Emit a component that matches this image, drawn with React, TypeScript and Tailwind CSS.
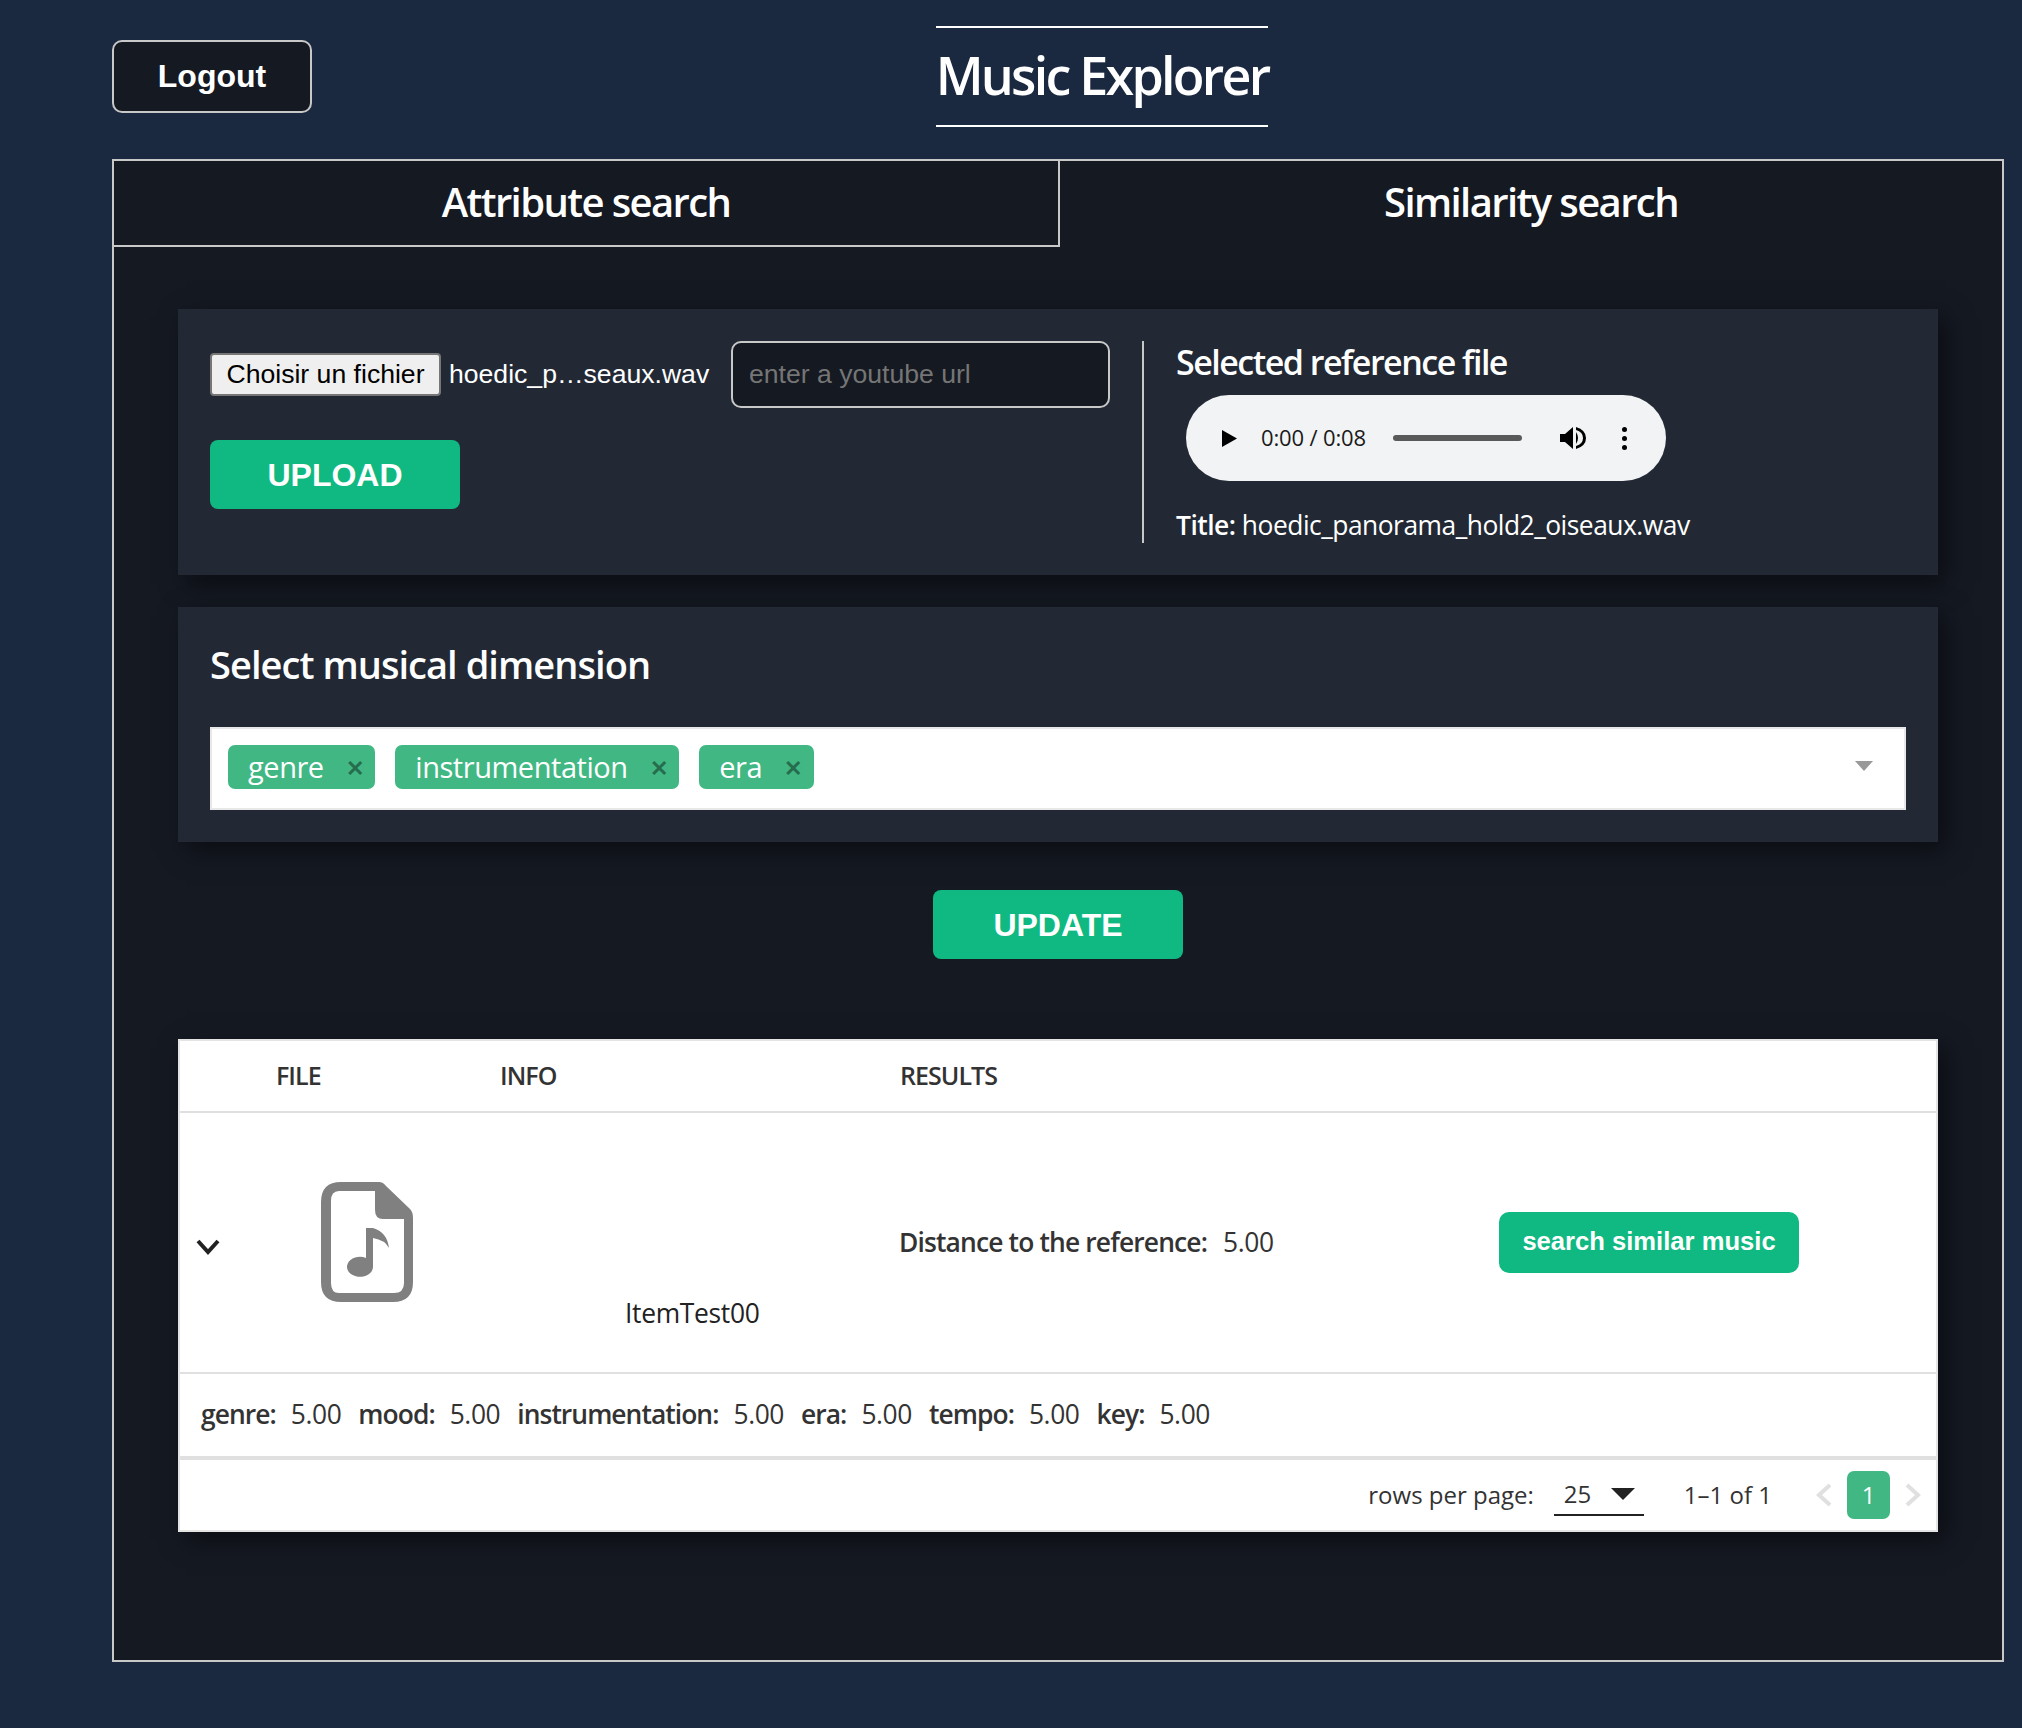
import React from 'react';

const openSans = { fontFamily: '"Open Sans", sans-serif' };

const dimensions = ['genre', 'instrumentation', 'era'];
const scores = ['genre', 'mood', 'instrumentation', 'era', 'tempo', 'key'];

// Green multiselect tag
const Tag: React.FC<{ label: string }> = ({ label }) => (
  <span className="flex h-[44px] items-center rounded-[7px] bg-[#41b883] pl-[20px] pr-[12px] text-[29px] tracking-[-0.45px] text-white">
    <span>{label}</span>
    <span className="ml-[22px] text-[22px] font-bold leading-none text-[#266d4d]">✕</span>
  </span>
);

const FileAudioIcon = () => (
  <svg width="92" height="120" viewBox="0 0 92 120" fill="#808080">
    <path
      fillRule="evenodd"
      d="M20 0H58Q62 0 65 4L89 27Q92 30 92 36V100Q92 120 72 120H20Q0 120 0 100V20Q0 0 20 0ZM18 9Q10 9 10 19V101Q10 111 18 111H73Q83 111 83 101V37H62Q54 37 54 28V9Z"
    />
    <path d="M45 46H52Q66 50 68 66Q64 58 52 56V85A13 10 0 1 1 45 76Z" />
  </svg>
);

const App: React.FC = () => {
  return (
    <div className="min-h-[1728px] bg-[#1a2840] pl-[112px] pr-[18px] pt-[26px]" style={openSans}>
      {/* Header */}
      <div className="flex items-start">
        <button
          className="mt-[14px] h-[73px] w-[200px] rounded-[10px] border-2 border-[#c8c8c8] bg-[#151922] pb-[2px] text-[32px] font-bold text-white"
          style={{ fontFamily: '"Liberation Sans", sans-serif' }}
        >
          Logout
        </button>
        <h1 className="ml-[624px] flex h-[101px] w-[332px] items-center justify-center whitespace-nowrap border-y-2 border-white pb-[4px] text-[52px] font-semibold tracking-[-2.75px] text-white">
          Music Explorer
        </h1>
      </div>

      {/* Main frame */}
      <div className="mt-[32px] h-[1503px] border-2 border-[#c8c8c8] bg-[#151922] text-white">
        <div className="flex h-[86px] text-[40px] font-semibold tracking-[-1.6px]">
          <div className="flex w-[946px] items-center justify-center border-b-2 border-r-2 border-[#c8c8c8] pb-[2px]">
            Attribute search
          </div>
          <div className="flex flex-1 items-center justify-center pb-[4px]">Similarity search</div>
        </div>

        <div className="px-[64px] pt-[62px]">
          {/* Upload panel */}
          <div className="flex h-[266px] bg-[#222935] p-[32px] shadow-[8px_8px_24px_rgba(0,0,0,0.5)]">
            <div className="w-[932px]">
              <div className="flex h-[67px] items-center" style={{ fontFamily: '"Liberation Sans", sans-serif' }}>
                <button className="h-[43px] w-[231px] rounded-[4px] border-2 border-[#767676] bg-[#efefef] text-[26.6px] text-black">
                  Choisir un fichier
                </button>
                <span className="ml-[8px] w-[282px] text-[26.6px]">hoedic_p…seaux.wav</span>
                <div className="flex h-[67px] w-[379px] items-center rounded-[10px] border-2 border-[#c8c8c8] bg-[#151922] px-[16px] text-[26.6px] text-[#757575]">
                  enter a youtube url
                </div>
              </div>
              <button
                className="mt-[32px] h-[69px] w-[250px] rounded-[8px] bg-[#10b981] text-[32px] font-bold text-white"
                style={{ fontFamily: '"Liberation Sans", sans-serif' }}
              >
                UPLOAD
              </button>
            </div>
            <div className="border-l-2 border-[#c8c8c8] pl-[32px]">
              <h3 className="mt-[-1px] text-[34px] font-semibold leading-[44px] tracking-[-1.5px]">Selected reference file</h3>
              {/* Audio player */}
              <div className="ml-[10px] mt-[11px] flex h-[86px] w-[480px] items-center rounded-[43px] bg-[#f1f3f4] pl-[36px] text-[#1a1a1a]">
                <svg width="15" height="17" viewBox="0 0 15 17" fill="black">
                  <path d="M0 0L15 8.5L0 17Z" />
                </svg>
                <span className="ml-[24px] w-[106px] whitespace-nowrap pb-[2px] text-[22px] tracking-[-0.15px]">0:00 / 0:08</span>
                <span className="ml-[26px] h-[6px] w-[129px] rounded-full bg-[#595959]" />
                <svg className="ml-[38px]" width="26" height="24" viewBox="0 0 26 24" fill="black">
                  <path d="M0 8V16H5L13 23V1L5 8Z" />
                  <path d="M16 6Q20 12 16 18Z" />
                  <path d="M16 1Q26 4 26 12T16 23V20Q23 18 23 12T16 4Z" />
                </svg>
                <span className="ml-[36px] flex flex-col gap-[4px]">
                  <span className="h-[5px] w-[5px] rounded-full bg-black" />
                  <span className="h-[5px] w-[5px] rounded-full bg-black" />
                  <span className="h-[5px] w-[5px] rounded-full bg-black" />
                </span>
              </div>
              <p className="mt-[26px] text-[26.4px] leading-[36px] tracking-[-0.5px]">
                <span className="font-semibold">Title:</span> hoedic_panorama_hold2_oiseaux.wav
              </p>
            </div>
          </div>

          {/* Musical dimension panel */}
          <div className="mt-[32px] h-[235px] bg-[#222935] px-[32px] pt-[31px] shadow-[8px_8px_24px_rgba(0,0,0,0.5)]">
            <h2 className="text-[38px] font-semibold leading-[52px] tracking-[-0.95px]">Select musical dimension</h2>
            <div className="mt-[37px] flex h-[83px] items-center gap-[20px] border-2 border-[#e8e8e8] bg-white pb-[4px] pl-[16px]">
              {dimensions.map((d) => (
                <Tag key={d} label={d} />
              ))}
              <span className="mb-[2px] ml-auto mr-[31px] h-0 w-0 border-x-[9px] border-t-[10px] border-x-transparent border-t-[#999]" />
            </div>
          </div>

          {/* Update */}
          <div className="mt-[48px] flex justify-center">
            <button
              className="h-[69px] w-[250px] rounded-[8px] bg-[#10b981] text-[32px] font-bold text-white"
              style={{ fontFamily: '"Liberation Sans", sans-serif' }}
            >
              UPDATE
            </button>
          </div>

          {/* Results table */}
          <div className="mt-[80px] h-[493px] border-2 border-[#e4e4e4] bg-white text-[#333] shadow-[8px_8px_24px_rgba(0,0,0,0.5)]">
            <div className="flex h-[72px] items-center border-b-2 border-[#e0e0e0] text-[25px] font-semibold tracking-[-0.95px]">
              <span className="ml-[96px] w-[224px]">FILE</span>
              <span className="w-[400px]">INFO</span>
              <span>RESULTS</span>
            </div>
            <div className="flex h-[261px] items-center border-b-2 border-[#e0e0e0]">
              <svg className="ml-[16px] mt-[8px]" width="24" height="16" viewBox="0 0 24 16" fill="none" stroke="#222" strokeWidth="4">
                <path d="M2 2L12 13L22 2" />
              </svg>
              <div className="ml-[101px] mt-[-2px]">
                <FileAudioIcon />
              </div>
              <span className="ml-[212px] mt-[142px] w-[274px] text-[26.4px] tracking-[-0.3px] text-[#222]">ItemTest00</span>
              <p className="w-[600px] text-[26.4px]">
                <span className="font-semibold tracking-[-0.85px]">Distance to the reference:</span>
                <span className="ml-[16px] tracking-[-0.4px]">5.00</span>
              </p>
              <button
                className="h-[61px] w-[300px] rounded-[10px] bg-[#10b981] pb-[2px] text-[25.6px] font-bold text-white"
                style={{ fontFamily: '"Liberation Sans", sans-serif' }}
              >
                search similar music
              </button>
            </div>
            <div className="flex h-[86px] items-center gap-[17px] border-b-4 border-[#e0e0e0] pl-[21px] text-[26.4px]">
              {scores.map((s) => (
                <span key={s}>
                  <span className="font-semibold tracking-[-0.95px]">{s}:</span>
                  <span className="ml-[15px] tracking-[-0.4px]">5.00</span>
                </span>
              ))}
            </div>
            <div className="flex h-[68px] items-center pt-[2px] text-[24px] text-[#333]">
              <span className="ml-auto">rows per page:</span>
              <span className="relative ml-[20px] flex h-[42px] w-[90px] items-center border-b-2 border-[#222] pl-[10px]">
                25
                <span className="ml-[20px] h-0 w-0 border-x-[12px] border-t-[12px] border-x-transparent border-t-[#222]" />
              </span>
              <span className="ml-[40px]">1–1 of 1</span>
              <svg className="ml-[44px]" width="16" height="24" viewBox="0 0 16 24" fill="none" stroke="#e0e0e0" strokeWidth="4">
                <path d="M14 2L3 12L14 22" />
              </svg>
              <span className="ml-[15px] flex h-[48px] w-[43px] items-center justify-center rounded-[7px] bg-[#41b883] text-white">1</span>
              <svg className="ml-[15px] mr-[15px]" width="16" height="24" viewBox="0 0 16 24" fill="none" stroke="#e0e0e0" strokeWidth="4">
                <path d="M2 2L13 12L2 22" />
              </svg>
            </div>
          </div>
        </div>
      </div>
    </div>
  );
};

export default App;
